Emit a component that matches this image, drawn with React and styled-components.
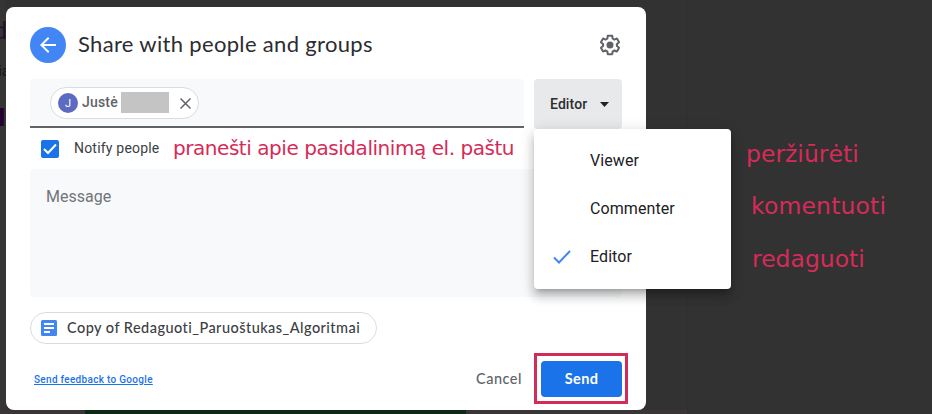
import React from "react";
import styled, { createGlobalStyle } from "styled-components";

const Global = createGlobalStyle`
  *{box-sizing:border-box}
  body{margin:0;background:#323232;overflow:hidden;font-family:Roboto,"Liberation Sans",sans-serif;color:#202124}
  button{font:inherit;border:0;background:none;padding:0;margin:0;color:inherit}
`;

const Screen = styled.main`
  position: relative;
  width: 932px;
  height: 414px;
  background: linear-gradient(90deg, #353535 0 6px, #323232 6px 687px, #303030 687px 688px, #323232 688px);
  overflow: hidden;
  padding: 7px 0 0 6px;
`;
const PageText = styled.span`
  position: absolute;
  right: ${p => 932 - p.$right}px;
  top: ${p => p.$y}px;
  line-height: 1;
  white-space: nowrap;
  font-size: ${p => p.$size}px;
  font-weight: ${p => p.$weight || 400};
  color: ${p => p.$color};
`;
const PageBanner = styled.div`
  position: absolute;
  left: 85px;
  top: 408px;
  width: 381px;
  height: 6px;
  background: #0d2a16;
`;
const PageStrip = styled.div`
  position: absolute;
  left: 0;
  top: 410px;
  width: 687px;
  height: 4px;
  background: #393536;
`;
const Dialog = styled.section`
  position: relative;
  display: flex;
  flex-direction: column;
  width: 640px;
  height: 403px;
  padding: 20px 24px 0;
  background: #fff;
  border-radius: 8px;
`;
const Header = styled.header`
  display: flex;
  align-items: center;
  height: 36px;
`;
const Back = styled.button`
  display: grid;
  place-items: center;
  width: 36px;
  height: 36px;
  border-radius: 50%;
  background: #4285f4;
`;
const Title = styled.h1`
  flex: 1;
  margin: 0 0 2px 12px;
  font: 400 22px/28px Lato, sans-serif;
  letter-spacing: ${p => p.$track}px;
  color: #2c2d30;
  white-space: nowrap;
`;
const Recipients = styled.div`
  display: flex;
  gap: 10px;
  margin-top: 16px;
  height: 50px;
`;
const Field = styled.div`
  width: 494px;
  height: 49px;
  padding: 8px 20px;
  background: #f8f9fb;
  border-bottom: 2px solid #5f6368;
  border-radius: 4px 4px 0 0;
`;
const Person = styled.div`
  display: flex;
  align-items: center;
  width: 149px;
  height: 32px;
  padding: 0 7px;
  border: 1px solid #dadce0;
  border-radius: 16px;
  background: #fff;
`;
const Avatar = styled.span`
  display: grid;
  place-items: center;
  width: 20px;
  height: 20px;
  border-radius: 50%;
  background: #5c6bc0;
  color: #fff;
  font-size: 11px;
`;
const PersonName = styled.span`
  width: 39px;
  margin: -2px 0 0 4px;
  font-size: 14px;
  font-weight: 500;
  letter-spacing: .2px;
  color: #5f6368;
  white-space: nowrap;
`;
const Redacted = styled.span`
  width: 48px;
  height: 21px;
  margin: -2px 11px 0 0;
  background: #c4c4c4;
`;
const RoleButton = styled.button`
  display: flex;
  align-items: center;
  justify-content: space-between;
  width: 88px;
  height: 50px;
  padding: 0 13px 0 16px;
  background: #e8e9eb;
  border-radius: 4px;
  font-size: 14px;
  font-weight: 500;
  letter-spacing: .1px;
  color: #2c2d30;
`;
const Notify = styled.div`
  display: flex;
  align-items: center;
  height: 39px;
  padding: 1px 0 0 11px;
`;
const Checkbox = styled.span`
  display: grid;
  place-items: center;
  width: 18px;
  height: 18px;
  border-radius: 2px;
  background: #1a73e8;
`;
const NotifyLabel = styled.span`
  width: 99px;
  margin: -2px 0 0 15px;
  font-size: 14px;
  letter-spacing: .2px;
  color: #3c4043;
`;
const Note = styled.span`
  font: 400 ${p => p.$size}px/28px "DejaVu Sans", sans-serif;
  letter-spacing: ${p => p.$track || 0}px;
  color: #d52b58;
  white-space: nowrap;
`;
const NotifyNote = styled(Note)`
  margin-top: -2px;
`;
const Message = styled.div`
  height: 128px;
  margin-top: 1px;
  padding: 18px 16px;
  border-radius: 4px;
  background: #f8f9fb;
  color: #70757a;
  font-size: 16px;
  line-height: 20px;
`;
const FileChip = styled.div`
  display: flex;
  align-items: center;
  width: 347px;
  height: 32px;
  margin-top: 15px;
  padding-left: 10px;
  border: 1px solid #dadce0;
  border-radius: 16px;
`;
const FileName = styled.span`
  margin: -1px 0 0 10px;
  font: 500 14.5px/20px Lato, sans-serif;
  letter-spacing: .46px;
  color: #3c4043;
  white-space: nowrap;
`;
const Footer = styled.footer`
  display: flex;
  align-items: center;
  height: 51px;
  margin: 9px -6px 0 4px;
`;
const Feedback = styled.a`
  flex: 1;
  padding-top: 2px;
  font-size: 10px;
  font-weight: 500;
  letter-spacing: .3px;
  color: #1a73e8;
  text-decoration: underline;
`;
const Cancel = styled.button`
  margin-right: 12px;
  font: 500 14.5px/20px Lato, sans-serif;
  letter-spacing: .5px;
  color: #5f6368;
`;
const Highlight = styled.div`
  width: 94px;
  height: 51px;
  padding: 5px 4px;
  border: 3px solid #d52b58;
`;
const Send = styled.button`
  width: 81px;
  height: 36px;
  border-radius: 4px;
  background: #1a73e8;
  color: #fff;
  font: 700 14.5px/20px Lato, sans-serif;
  letter-spacing: .4px;
`;
const Menu = styled.div`
  position: absolute;
  left: 534px;
  top: 129px;
  width: 197px;
  height: 160px;
  padding: 7px 0 9px;
  border-radius: 4px;
  background: #fff;
  box-shadow: 0 5px 5px -3px rgba(0,0,0,.2), 0 8px 10px 1px rgba(0,0,0,.14), 0 3px 14px 2px rgba(0,0,0,.12);
`;
const MenuItem = styled.div`
  display: grid;
  grid-template-columns: 56px 1fr;
  align-items: center;
  height: 48px;
  font-size: 16px;
  letter-spacing: .08px;
`;
const CheckSlot = styled.span`
  display: grid;
  place-items: center;
  padding-top: 2px;
`;
const Callout = styled(Note)`
  position: absolute;
  left: ${p => p.$x}px;
  top: ${p => p.$y}px;
`;

export default function App() {
  return (
    <>
      <Global />
      <Screen>
        <PageText $right={7} $y={19} $size={24} $color="#24122c">d</PageText>
        <PageText $right={10} $y={64} $size={15} $color="#151515">ia</PageText>
        <PageText $right={5} $y={106} $size={24} $weight={900} $color="#25002f">l</PageText>
        <PageStrip />
        <PageBanner />
        <Dialog>
          <Header>
            <Back aria-label="Back">
              <svg width="24" height="24" viewBox="0 0 24 24" fill="#fff"><path d="M20 11H7.8l5.6-5.6L12 4l-8 8 8 8 1.4-1.4L7.8 13H20z" /></svg>
            </Back>
            <Title $track={0.33}>Share with people and groups</Title>
            <svg width="24" height="24" viewBox="0 0 24 24" fill="#5f6368"><path d="M13.85 22.25h-3.7c-.74 0-1.36-.54-1.45-1.27l-.27-1.89c-.27-.14-.53-.29-.79-.46l-1.8.72c-.7.26-1.47-.03-1.81-.65L2.2 15.53c-.35-.66-.2-1.44.36-1.88l1.53-1.19c-.01-.15-.02-.3-.02-.46 0-.15.01-.31.02-.46l-1.52-1.19c-.59-.45-.74-1.26-.37-1.88l1.85-3.19c.34-.62 1.11-.9 1.79-.63l1.81.73c.26-.17.52-.32.78-.46l.27-1.91c.09-.7.71-1.25 1.44-1.25h3.7c.74 0 1.36.54 1.45 1.27l.27 1.89c.27.14.53.29.79.46l1.8-.72c.71-.26 1.48.03 1.82.65l1.84 3.18c.36.66.2 1.44-.36 1.88l-1.52 1.19c.01.15.02.3.02.46s-.01.31-.02.46l1.52 1.19c.56.45.72 1.23.37 1.86l-1.86 3.22c-.34.62-1.11.9-1.8.63l-1.8-.72c-.26.17-.52.32-.78.46l-.27 1.91c-.1.68-.72 1.22-1.46 1.22zm-3.23-2h2.76l.37-2.55.53-.22c.44-.18.88-.44 1.34-.78l.45-.34 2.38.96 1.38-2.4-2.03-1.58.07-.56c.03-.26.06-.51.06-.78s-.03-.53-.06-.78l-.07-.56 2.03-1.58-1.39-2.4-2.39.96-.45-.35c-.42-.32-.87-.58-1.33-.77l-.52-.22-.37-2.55h-2.76l-.37 2.55-.53.21c-.44.19-.88.44-1.34.79l-.45.33-2.38-.95-1.39 2.39 2.03 1.58-.07.56a7 7 0 0 0-.06.79c0 .26.02.53.06.78l.07.56-2.03 1.58 1.38 2.4 2.39-.96.45.35c.43.33.86.58 1.33.77l.53.22z" /><circle cx="12" cy="12" r="3.5" /></svg>
          </Header>
          <Recipients>
            <Field>
              <Person>
                <Avatar>J</Avatar>
                <PersonName>Justė</PersonName>
                <Redacted />
                <svg width="11" height="11" viewBox="0 0 11 11" stroke="#5f6368" strokeWidth="1.5"><path d="M.5.5l10 10M10.5.5l-10 10" /></svg>
              </Person>
            </Field>
            <RoleButton>Editor<svg width="9" height="5"><path d="M0 0h9L4.500 5z" fill="#202124" /></svg></RoleButton>
          </Recipients>
          <Notify>
            <Checkbox><svg width="14" height="12" viewBox="0 0 14 12" fill="none" stroke="#fff" strokeWidth="2"><path d="M1 6l4 4 8-8.500" /></svg></Checkbox>
            <NotifyLabel>Notify people</NotifyLabel>
            <NotifyNote $size={20} $track={-0.45}>pranešti apie pasidalinimą el. paštu</NotifyNote>
          </Notify>
          <Message>Message</Message>
          <FileChip>
            <svg width="16" height="16" viewBox="0 0 16 16"><rect width="16" height="16" rx="1.500" fill="#4285f4" /><path d="M3 4h10M3 8h10M3 12h6" stroke="#fff" strokeWidth="1.800" /></svg>
            <FileName>Copy of Redaguoti_Paruoštukas_Algoritmai</FileName>
          </FileChip>
          <Footer>
            <Feedback>Send feedback to Google</Feedback>
            <Cancel>Cancel</Cancel>
            <Highlight><Send>Send</Send></Highlight>
          </Footer>
        </Dialog>
        <Menu>
          <MenuItem><CheckSlot />Viewer</MenuItem>
          <MenuItem><CheckSlot />Commenter</MenuItem>
          <MenuItem><CheckSlot><svg width="18" height="14" viewBox="0 0 18 14" fill="none" stroke="#4285f4" strokeWidth="2"><path d="M1 7.500l5 5L17 1" /></svg></CheckSlot>Editor</MenuItem>
        </Menu>
        <Callout $size={23.5} $x={746} $y={140}>peržiūrėti</Callout>
        <Callout $size={23.5} $track={0.15} $x={751} $y={192}>komentuoti</Callout>
        <Callout $size={23.5} $x={752} $y={245}>redaguoti</Callout>
      </Screen>
    </>
  );
}
